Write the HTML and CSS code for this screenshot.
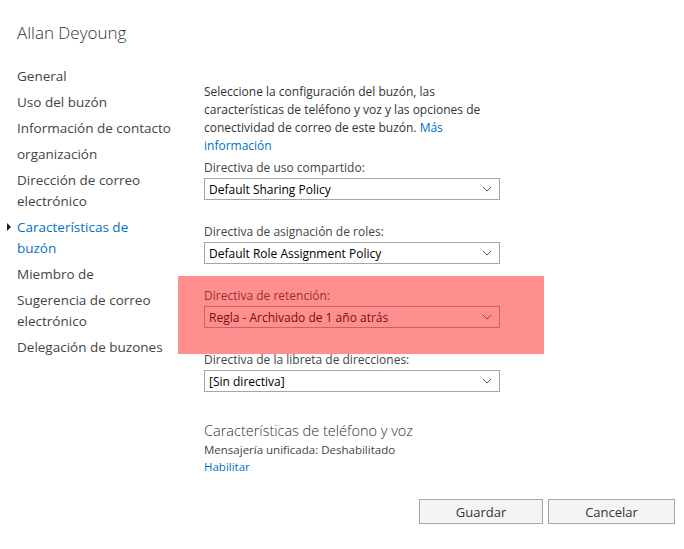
FILE: index.html
```html
<!DOCTYPE html>
<html lang="es">
<head>
<meta charset="utf-8">
<title>Allan Deyoung</title>
<link rel="stylesheet" href="styles.css">
</head>
<body>
<div class="page">
  <h1 class="title">Allan Deyoung</h1>
  <div class="layout">
    <nav class="nav">
      <ul>
        <li>General</li>
        <li>Uso del buzón</li>
        <li>Información de contacto</li>
        <li>organización</li>
        <li>Dirección de correo electrónico</li>
        <li class="active">Características de<br>buzón</li>
        <li>Miembro de</li>
        <li>Sugerencia de correo electrónico</li>
        <li>Delegación de buzones</li>
      </ul>
    </nav>
    <main class="content">
      <p class="intro">Seleccione la configuración del buzón, las características de teléfono y voz y las opciones de conectividad de correo de este buzón. <a href="#" class="link">Más información</a></p>
      <div class="field">
        <label class="label">Directiva de uso compartido:</label>
        <div class="select"><span>Default Sharing Policy</span><svg class="chev" viewBox="0 0 10 6" width="10" height="6"><path d="M1 1 L5 5 L9 1" fill="none" stroke="#555" stroke-width="1"/></svg></div>
      </div>
      <div class="field">
        <label class="label">Directiva de asignación de roles:</label>
        <div class="select"><span>Default Role Assignment Policy</span><svg class="chev" viewBox="0 0 10 6" width="10" height="6"><path d="M1 1 L5 5 L9 1" fill="none" stroke="#555" stroke-width="1"/></svg></div>
      </div>
      <div class="field">
        <label class="label">Directiva de retención:</label>
        <div class="select"><span>Regla - Archivado de 1 año atrás</span><svg class="chev" viewBox="0 0 10 6" width="10" height="6"><path d="M1 1 L5 5 L9 1" fill="none" stroke="#555" stroke-width="1"/></svg></div>
      </div>
      <div class="field">
        <label class="label">Directiva de la libreta de direcciones:</label>
        <div class="select"><span>[Sin directiva]</span><svg class="chev" viewBox="0 0 10 6" width="10" height="6"><path d="M1 1 L5 5 L9 1" fill="none" stroke="#555" stroke-width="1"/></svg></div>
      </div>
      <section class="phone">
        <h2 class="subhead">Características de teléfono y voz</h2>
        <div class="status">Mensajería unificada: Deshabilitado</div>
        <a href="#" class="link small">Habilitar</a>
      </section>
    </main>
  </div>
  <div class="actions">
    <button class="btn save">Guardar</button>
    <button class="btn cancel">Cancelar</button>
  </div>
  <div class="highlight"></div>
</div>
</body>
</html>
```
FILE: styles.css
```css
* { box-sizing: border-box; }
html, body { margin: 0; padding: 0; background: #fff; }
body {
  font-family: "Open Sans", "Noto Sans", sans-serif;
  color: #333;
}
.page {
  position: relative;
  width: 684px;
  height: 549px;
  padding: 20px 9px 0 17px;
}
.title {
  margin: 0;
  font-size: 17px;
  font-weight: 300;
  line-height: 26px;
  color: #333;
}
.layout {
  display: flex;
  margin-top: 20px;
}
.nav { width: 170px; flex: none; }
.nav ul { list-style: none; margin: 0; padding: 0; }
.nav li {
  font-size: 13.5px;
  line-height: 21px;
  margin-bottom: 5px;
  color: #444;
  position: relative;
  padding-right: 10px;
}
.nav li.active { color: #0072c6; }
.nav li.active::before {
  content: "";
  position: absolute;
  left: -10px;
  top: 6px;
  border-left: 4px solid #222;
  border-top: 4px solid transparent;
  border-bottom: 4px solid transparent;
}
.content {
  width: 296px;
  margin-left: 17px;
  padding-top: 17px;
}
.intro {
  margin: 0 0 4px;
  font-size: 12px;
  line-height: 18px;
  color: #333;
}
.link { color: #0072c6; text-decoration: none; }
.field { margin-bottom: 23px; }
.label {
  display: block;
  font-size: 12px;
  line-height: 18px;
  color: #444;
  margin-bottom: 1px;
}
.select {
  display: flex;
  align-items: center;
  justify-content: space-between;
  height: 22px;
  border: 1px solid #a6a6a6;
  padding: 0 7px 0 4px;
  font-size: 12px;
  color: #000;
  background: #fff;
}
.chev { display: block; }
.phone { margin-top: 29px; }
.subhead {
  margin: 0;
  font-size: 14.5px;
  font-weight: 300;
  line-height: 20px;
  color: #333;
}
.status { font-size: 11.5px; line-height: 17px; color: #444; }
.small { font-size: 11.5px; line-height: 17px; display: block; }
.actions {
  display: flex;
  justify-content: flex-end;
  gap: 5px;
  margin-top: 24px;
}
.btn {
  height: 25px;
  border: 1px solid #a6a6a6;
  background: #f4f4f4;
  font-family: inherit;
  font-size: 13px;
  color: #333;
}
.save { width: 124px; }
.cancel { width: 127px; }
.highlight {
  position: absolute;
  left: 178px;
  top: 276px;
  width: 366px;
  height: 78px;
  background: rgba(255, 20, 20, 0.48);
}
```
